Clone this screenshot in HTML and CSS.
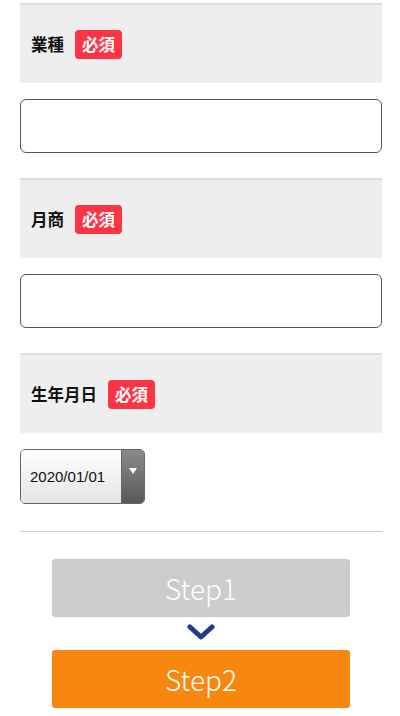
FILE: index.html
```html
<!DOCTYPE html>
<html lang="ja">
	<head>
		<meta charset="UTF-8">
		<meta name="viewport" content="width=device-width, initial-scale=1.0">
		<title>お申し込み</title>
		<link rel="stylesheet" href="styles.css">
	</head>
	<body>
		<div class="form">

			<div class="head">
				<span class="label">業種</span>
				<span class="must">必須</span>
			</div>
			<div class="field">
				<input type="text" class="text">
			</div>

			<div class="head">
				<span class="label">月商</span>
				<span class="must">必須</span>
			</div>
			<div class="field">
				<input type="text" class="text">
			</div>

			<div class="head">
				<span class="label">生年月日</span>
				<span class="must">必須</span>
			</div>
			<div class="field">
				<div class="date">
					<span class="date-val">2020/01/01</span>
					<span class="date-btn"><i></i></span>
				</div>
			</div>

			<hr class="line">

			<div class="steps">
				<button class="step off">Step1</button>
				<svg class="arrow" width="28" height="18" viewBox="0 0 28 18">
					<path d="M3 3 L14 13 L25 3" fill="none" stroke="#213a8e" stroke-width="5" stroke-linecap="round" stroke-linejoin="round"/>
				</svg>
				<button class="step on">Step2</button>
			</div>

		</div>
	</body>
</html>
```

FILE: styles.css
```css
*{
	margin: 0;
	padding: 0;
	box-sizing: border-box;
}
body{
	font-family: "Noto Sans CJK JP", "Liberation Sans", sans-serif;
	background-color: #fff;
}
.form{
	width: 362px;
	margin-left: 20px;
	padding-top: 3px;
}

.head{
	display: flex;
	align-items: center;
	height: 80px;
	padding-left: 11px;
	background-color: #eee;
	border-top: 2px solid #ddd;
}
.label{
	font-size: 16.5px;
	font-weight: bold;
	color: #111;
}
.must{
	margin-left: 11px;
	padding: 0 7px;
	height: 29px;
	line-height: 29px;
	font-size: 16.5px;
	font-weight: bold;
	color: #fff;
	background-color: #fc3443;
	border-radius: 4px;
}

.field{
	padding: 16px 0 25px;
}
.text{
	display: block;
	width: 100%;
	height: 54px;
	border: 1px solid #555;
	border-radius: 6px;
	outline: none;
	background-color: #fff;
}

.date{
	display: flex;
	width: 125px;
	height: 55px;
	border: 1px solid #666;
	border-radius: 5px;
	overflow: hidden;
}
.date-val{
	flex: 1;
	padding-left: 9px;
	line-height: 53px;
	font-family: "Liberation Sans", sans-serif;
	font-size: 15px;
	color: #111;
	background: linear-gradient(#fff, #e4e4e4);
	border-right: 1px solid #666;
}
.date-btn{
	width: 22px;
	padding-top: 18px;
	display: flex;
	justify-content: center;
	background: linear-gradient(#8a8a8a, #595959);
}
.date-btn i{
	width: 0;
	height: 0;
	border-left: 4px solid transparent;
	border-right: 4px solid transparent;
	border-top: 6px solid #fff;
}

.line{
	height: 0;
	border: 0;
	border-top: 1px solid #ccc;
	margin-top: 2px;
}

.steps{
	display: flex;
	flex-direction: column;
	align-items: center;
	padding-top: 27px;
}
.step{
	width: 298px;
	height: 58px;
	font-family: "Noto Sans CJK JP", sans-serif;
	font-size: 28px;
	font-weight: 300;
	color: #fff;
	border: 0;
	border-radius: 3px;
	outline: none;
}
.step.off{
	background-color: #ccc;
}
.step.on{
	background-color: #f7870f;
}
.arrow{
	display: block;
	margin: 7px 0 8px;
}
```
